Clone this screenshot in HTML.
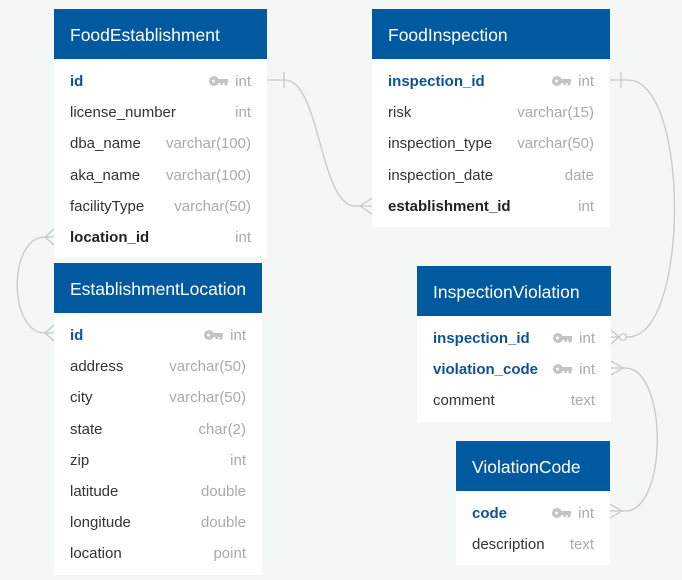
<!DOCTYPE html>
<html><head><meta charset="utf-8"><style>
body{margin:0;width:682px;height:580px;background:#f5f6f6;position:relative;overflow:hidden;font-family:"Liberation Sans",Arial,sans-serif}
.t{position:absolute;background:#fff}
.h{background:#0159a0;color:#fff;font-size:17.5px;height:50px;line-height:52px;padding-left:16px}
.b{padding-top:7px;padding-bottom:5px}
.r{height:31.2px;line-height:31.2px;padding:0 16px;font-size:15px;color:#333;display:flex;justify-content:space-between;white-space:nowrap}
.r span:last-child{color:#aaa}
.r.k span:first-child{font-weight:bold;color:#0b5394}
.r.f span:first-child{font-weight:bold;color:#222}
.key{display:inline-block;vertical-align:middle;margin-right:6px;margin-top:-3px}
svg.l{position:absolute;left:0;top:0}
</style></head><body>
<svg class="l" width="682" height="580" fill="none" stroke="#c8c8c8" stroke-width="1.3">
<path d="M267 80 H285 C320 80 320 206 355 206 H372"/><path d="M284 72 V88"/>
<path d="M360 206 L372 198 M360 206 L372 214"/>
<path d="M45 237 C8 237 8 333 45 333"/>
<path d="M45 237 H54 M45 237 L54 229 M45 237 L54 245"/>
<path d="M45 333 H54 M45 333 L54 325 M45 333 L54 341"/>
<path d="M610 80 H628 C690 80 690 337 628 337 H611"/><path d="M621 72 V88"/>
<circle cx="623" cy="337" r="3.2" fill="#fff"/>
<path d="M619 337 L611 330 M619 337 L611 344"/>
<path d="M611 368 H625 C668 368 668 511 625 511 H610"/>
<path d="M623 368 L611 361 M623 368 L611 375"/>
<path d="M622 511 L610 504 M622 511 L610 518"/>
</svg>
<svg width="0" height="0" style="position:absolute"><defs><g id="k"><circle cx="5" cy="5" r="5" fill="#c4c4c4"/><circle cx="4.5" cy="5" r="1.5" fill="#fff"/><rect x="8" y="3" width="11" height="4" fill="#c4c4c4"/><rect x="15.5" y="5" width="3" height="4.5" fill="#c4c4c4"/><rect x="11.5" y="5" width="2.5" height="4" fill="#c4c4c4"/></g></defs></svg>

<div class="t" style="left:54px;top:9px;width:213px">
<div class="h">FoodEstablishment</div><div class="b">
<div class="r k"><span>id</span><span><svg class="key" width="20" height="10"><use href="#k"/></svg>int</span></div>
<div class="r"><span>license_number</span><span>int</span></div>
<div class="r"><span>dba_name</span><span>varchar(100)</span></div>
<div class="r"><span>aka_name</span><span>varchar(100)</span></div>
<div class="r"><span>facilityType</span><span>varchar(50)</span></div>
<div class="r f"><span>location_id</span><span>int</span></div>
</div></div>

<div class="t" style="left:372px;top:9px;width:238px">
<div class="h">FoodInspection</div><div class="b">
<div class="r k"><span>inspection_id</span><span><svg class="key" width="20" height="10"><use href="#k"/></svg>int</span></div>
<div class="r"><span>risk</span><span>varchar(15)</span></div>
<div class="r"><span>inspection_type</span><span>varchar(50)</span></div>
<div class="r"><span>inspection_date</span><span>date</span></div>
<div class="r f"><span>establishment_id</span><span>int</span></div>
</div></div>

<div class="t" style="left:54px;top:263px;width:208px">
<div class="h">EstablishmentLocation</div><div class="b">
<div class="r k"><span>id</span><span><svg class="key" width="20" height="10"><use href="#k"/></svg>int</span></div>
<div class="r"><span>address</span><span>varchar(50)</span></div>
<div class="r"><span>city</span><span>varchar(50)</span></div>
<div class="r"><span>state</span><span>char(2)</span></div>
<div class="r"><span>zip</span><span>int</span></div>
<div class="r"><span>latitude</span><span>double</span></div>
<div class="r"><span>longitude</span><span>double</span></div>
<div class="r"><span>location</span><span>point</span></div>
</div></div>

<div class="t" style="left:417px;top:266px;width:194px">
<div class="h">InspectionViolation</div><div class="b">
<div class="r k"><span>inspection_id</span><span><svg class="key" width="20" height="10"><use href="#k"/></svg>int</span></div>
<div class="r k"><span>violation_code</span><span><svg class="key" width="20" height="10"><use href="#k"/></svg>int</span></div>
<div class="r"><span>comment</span><span>text</span></div>
</div></div>

<div class="t" style="left:456px;top:441px;width:154px">
<div class="h">ViolationCode</div><div class="b">
<div class="r k"><span>code</span><span><svg class="key" width="20" height="10"><use href="#k"/></svg>int</span></div>
<div class="r"><span>description</span><span>text</span></div>
</div></div>
</body></html>
